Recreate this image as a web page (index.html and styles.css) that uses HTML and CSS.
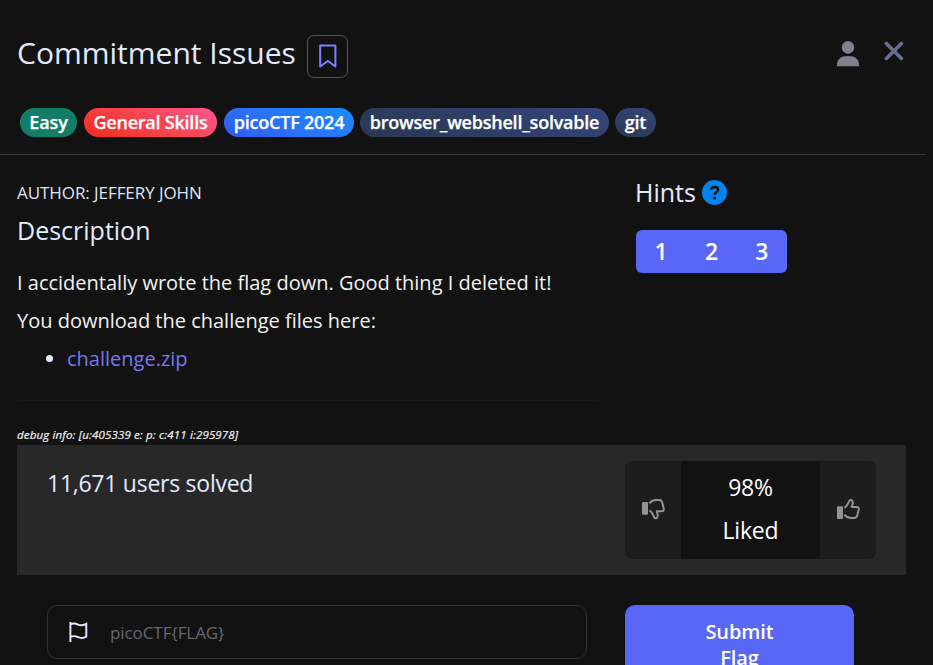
FILE: index.html
```html
<!DOCTYPE html>
<html lang="en">
<head>
<meta charset="utf-8">
<title>Commitment Issues</title>
<link rel="stylesheet" href="styles.css">
</head>
<body>
<div class="modal">
  <header class="header">
    <div class="title-row">
      <h1 class="title"><span>Commitment Issues</span></h1>
      <button class="bookmark" aria-label="Bookmark">
        <svg width="18" height="24" viewBox="0 0 18 24" fill="none" stroke="#7d81ff" stroke-width="2" stroke-linejoin="round"><path d="M1.2 1.5H16.4V22.5L8.8 17L1.2 22.5Z"/></svg>
      </button>
      <div class="actions">
        <svg class="user" width="22" height="26" viewBox="0 0 22 26" fill="#7f818d"><circle cx="11" cy="6.4" r="6.3"/><path d="M0 25.3V23.5C0 18.5 4 15.2 8.5 15.2H13.5C18 15.2 22 18.5 22 23.5V25.3Z"/></svg>
        <svg class="close" width="20" height="20" viewBox="0 0 20 20" fill="none" stroke="#676e94" stroke-width="3.6" stroke-linecap="round"><path d="M2.4 2.4L17.4 17.4M17.4 2.4L2.4 17.4"/></svg>
      </div>
    </div>
    <div class="tags">
      <span class="tag easy"><span>Easy</span></span>
      <span class="tag general"><span>General Skills</span></span>
      <span class="tag event"><span>picoCTF 2024</span></span>
      <span class="tag topic webshell"><span>browser_webshell_solvable</span></span>
      <span class="tag topic git"><span>git</span></span>
    </div>
  </header>
  <main class="body">
    <section class="description">
      <p class="author"><span>AUTHOR: JEFFERY JOHN</span></p>
      <h2 class="subtitle"><span>Description</span></h2>
      <p class="text first"><span>I accidentally wrote the flag down. Good thing I deleted it!</span></p>
      <p class="text second"><span>You download the challenge files here:</span></p>
      <ul class="files"><li><a>challenge.zip</a></li></ul>
      <hr>
    </section>
    <aside class="hints">
      <h2 class="hints-title"><span>Hints</span>
        <svg width="25" height="25" viewBox="0 0 25 25"><circle cx="12.5" cy="12.5" r="12.5" fill="#0084f0"/><path d="M9 9.7C9.3 7.6 10.6 6.9 12.6 6.9C14.8 6.9 16.1 8 16.1 9.6C16.1 12.1 12.6 11.8 12.6 14.8" fill="none" stroke="#121212" stroke-width="2.5"/><circle cx="12.6" cy="18" r="1.6" fill="#121212"/></svg>
      </h2>
      <div class="hint-group"><button>1</button><button>2</button><button>3</button></div>
    </aside>
  </main>
  <p class="debug"><span>debug info: [u:405339 e: p: c:411 i:295978]</span></p>
  <section class="stats">
    <p class="solved"><span>11,671 users solved</span></p>
    <div class="rating">
      <button class="vote down" aria-label="Dislike"><svg width="23" height="21" viewBox="0 0 23 21"><rect x="0" y="3" width="6" height="12.7" rx="1" fill="#949494"/><path d="M7.3 4.2C9.5 1.8 11.5 1 14 1H17C19 1 19.8 1.8 20.2 3.6L21.7 9.5C22.1 11.3 21.3 12.3 19.6 12.3H14.8C14.8 14 16.2 15 15.7 17.2C15.1 19.7 13 20 12.1 18.2C11.4 16 10.4 14.8 9.6 13.4C9 12.4 8.3 11.9 7.3 11.6" fill="none" stroke="#949494" stroke-width="2" stroke-linejoin="round"/></svg></button>
      <div class="score"><span>98%</span><span>Liked</span></div>
      <button class="vote up" aria-label="Like"><svg width="23" height="21" viewBox="0 0 23 21"><rect x="0" y="7.3" width="6" height="12.7" rx="1" fill="#949494"/><path d="M7.3 15.8C9.5 18.2 11.5 19 14 19H17C19 19 19.8 18.2 20.2 16.4L21.7 10.8C22.1 9 21.3 8 19.6 8H14.8C14.8 6.3 16.2 5 15.7 2.9C15.1 .7 13 .5 12.1 2.2C11.4 4.2 10.4 5.5 9.6 6.8C9 7.8 8.3 8.3 7.3 8.6" fill="none" stroke="#949494" stroke-width="2" stroke-linejoin="round"/></svg></button>
    </div>
  </section>
  <form class="submit-row">
    <div class="field">
      <svg width="19" height="20" viewBox="0 0 19 20" fill="none" stroke="#e3ebff" stroke-width="1.9"><path d="M1.4 0V20M1.4 2.6C4 .8 6.5 1.4 9 2.7C12 4 15 3 17.3 1.8V14.6C15 16 12 16.4 9 15.2C6.5 13.8 4 13.8 1.4 15"/></svg>
      <span class="placeholder">picoCTF{FLAG}</span>
    </div>
    <button class="submit" type="button"><span>Submit</span><span>Flag</span></button>
  </form>
</div>
</body>
</html>
```
FILE: styles.css
```css
* { box-sizing: border-box; }
html, body { margin: 0; height: 100%; overflow: hidden; background: #121212; }
body { font-family: "Open Sans", sans-serif; color: #f2f2f2; }
h1, h2, p, ul { margin: 0; font-weight: 400; }
button { font-family: inherit; border: 0; padding: 0; color: #fff; }
svg { display: block; flex: none; }

.modal { height: 665px; overflow: hidden; }
.header { width: 925px; height: 155px; border-bottom: 1px solid #3b3b3b; }
.title-row { display: flex; align-items: flex-start; height: 108px; padding: 35px 21px 0 17px; }
.title { width: 290px; font-size: 30px; line-height: 35px; color: #e3ebff; white-space: nowrap; }
.bookmark { display: flex; justify-content: center; width: 41px; height: 43px; padding: 8px 0 0; background: transparent; border: 1px solid #55565d; border-radius: 7px; }
.actions { display: flex; gap: 25px; margin-left: auto; padding-top: 6px; }

.tags { display: flex; gap: 7px; padding-left: 20px; }
.tag { display: flex; justify-content: center; height: 29px; border-radius: 15px; font-size: 18px; font-weight: 600; line-height: 29px; letter-spacing: -.23px; -webkit-text-stroke: .25px #fff; color: #fff; white-space: nowrap; }
.easy { width: 57px; background: #147d68; letter-spacing: -.05px; }
.general { width: 133px; background: linear-gradient(25deg, #f02b20, #f8444f 50%, #ff5790); }
.event { width: 130px; background: linear-gradient(25deg, #305af4, #2875fa 50%, #188cff); }
.topic { background: linear-gradient(20deg, #293852, #35457a); }
.webshell { width: 249px; margin-left: -1px; }
.git { width: 41px; margin-left: -1px; }

.body { display: flex; height: 274px; }
.description { width: 619px; padding: 26px 20px 0 17px; white-space: nowrap; }
.author { font-size: 17px; line-height: 24px; letter-spacing: -.07px; color: #dfe5f8; }
.subtitle { margin-top: 10px; font-size: 25px; line-height: 30px; color: #e3ebff; }
.text { font-size: 20px; line-height: 30px; }
.first { margin-top: 23px; }
.second { margin-top: 8px; }
.files { margin-top: 8px; padding-left: 50px; font-size: 20px; line-height: 30px; }
.files li::marker { color: #e3ebff; }
.files a { color: #7678ee; }
.description hr { height: 1px; margin: 26px 0 0; border: 0; background: #191919; }
.hints { padding: 22px 0 0 16px; }
.hints-title { display: flex; align-items: flex-start; gap: 6px; height: 30px; font-size: 25px; line-height: 30px; color: #e3ebff; }
.hints-title svg { margin-top: 3px; }
.hint-group { display: flex; width: 151px; height: 43px; margin-top: 23px; margin-left: 1px; overflow: hidden; border-radius: 6px; background: #5967f6; }
.hint-group button { flex: 1; background: transparent; font-size: 23px; font-weight: 600; line-height: 43px; }

.debug { height: 16px; padding-left: 17px; font-size: 11.5px; font-style: italic; line-height: 12px; letter-spacing: .14px; -webkit-text-stroke: .2px #f2f2f2; }
.stats { display: flex; justify-content: space-between; width: 889px; height: 130px; margin-left: 17px; padding: 16px 30px; background: #282828; }
.solved { padding-top: 7px; font-size: 23px; line-height: 30px; letter-spacing: -.26px; color: #e3ebff; }
.rating { display: flex; width: 251px; height: 98px; overflow: hidden; border-radius: 7px; }
.vote { display: flex; align-items: flex-start; justify-content: center; width: 56px; padding-top: 38px; background: #1d1d1d; }
.score { display: flex; flex: 1; flex-direction: column; align-items: center; padding-top: 5px; background: #121212; color: #fff; font-size: 23px; line-height: 43px; letter-spacing: -.2px; }

.submit-row { display: flex; gap: 38px; padding: 30px 0 0 47px; }
.field { display: flex; align-items: flex-start; gap: 22px; width: 540px; height: 54px; padding: 16px 21px; border: 1px solid #333; border-radius: 10px; }
.placeholder { margin-top: -1px; font-size: 17px; line-height: 24px; letter-spacing: -.08px; color: #66676f; }
.submit { display: flex; flex-direction: column; align-items: center; width: 229px; height: 80px; padding-top: 14px; border-radius: 10px; background: #5967f6; font-size: 20px; font-weight: 600; line-height: 26px; letter-spacing: -.1px; }
```
